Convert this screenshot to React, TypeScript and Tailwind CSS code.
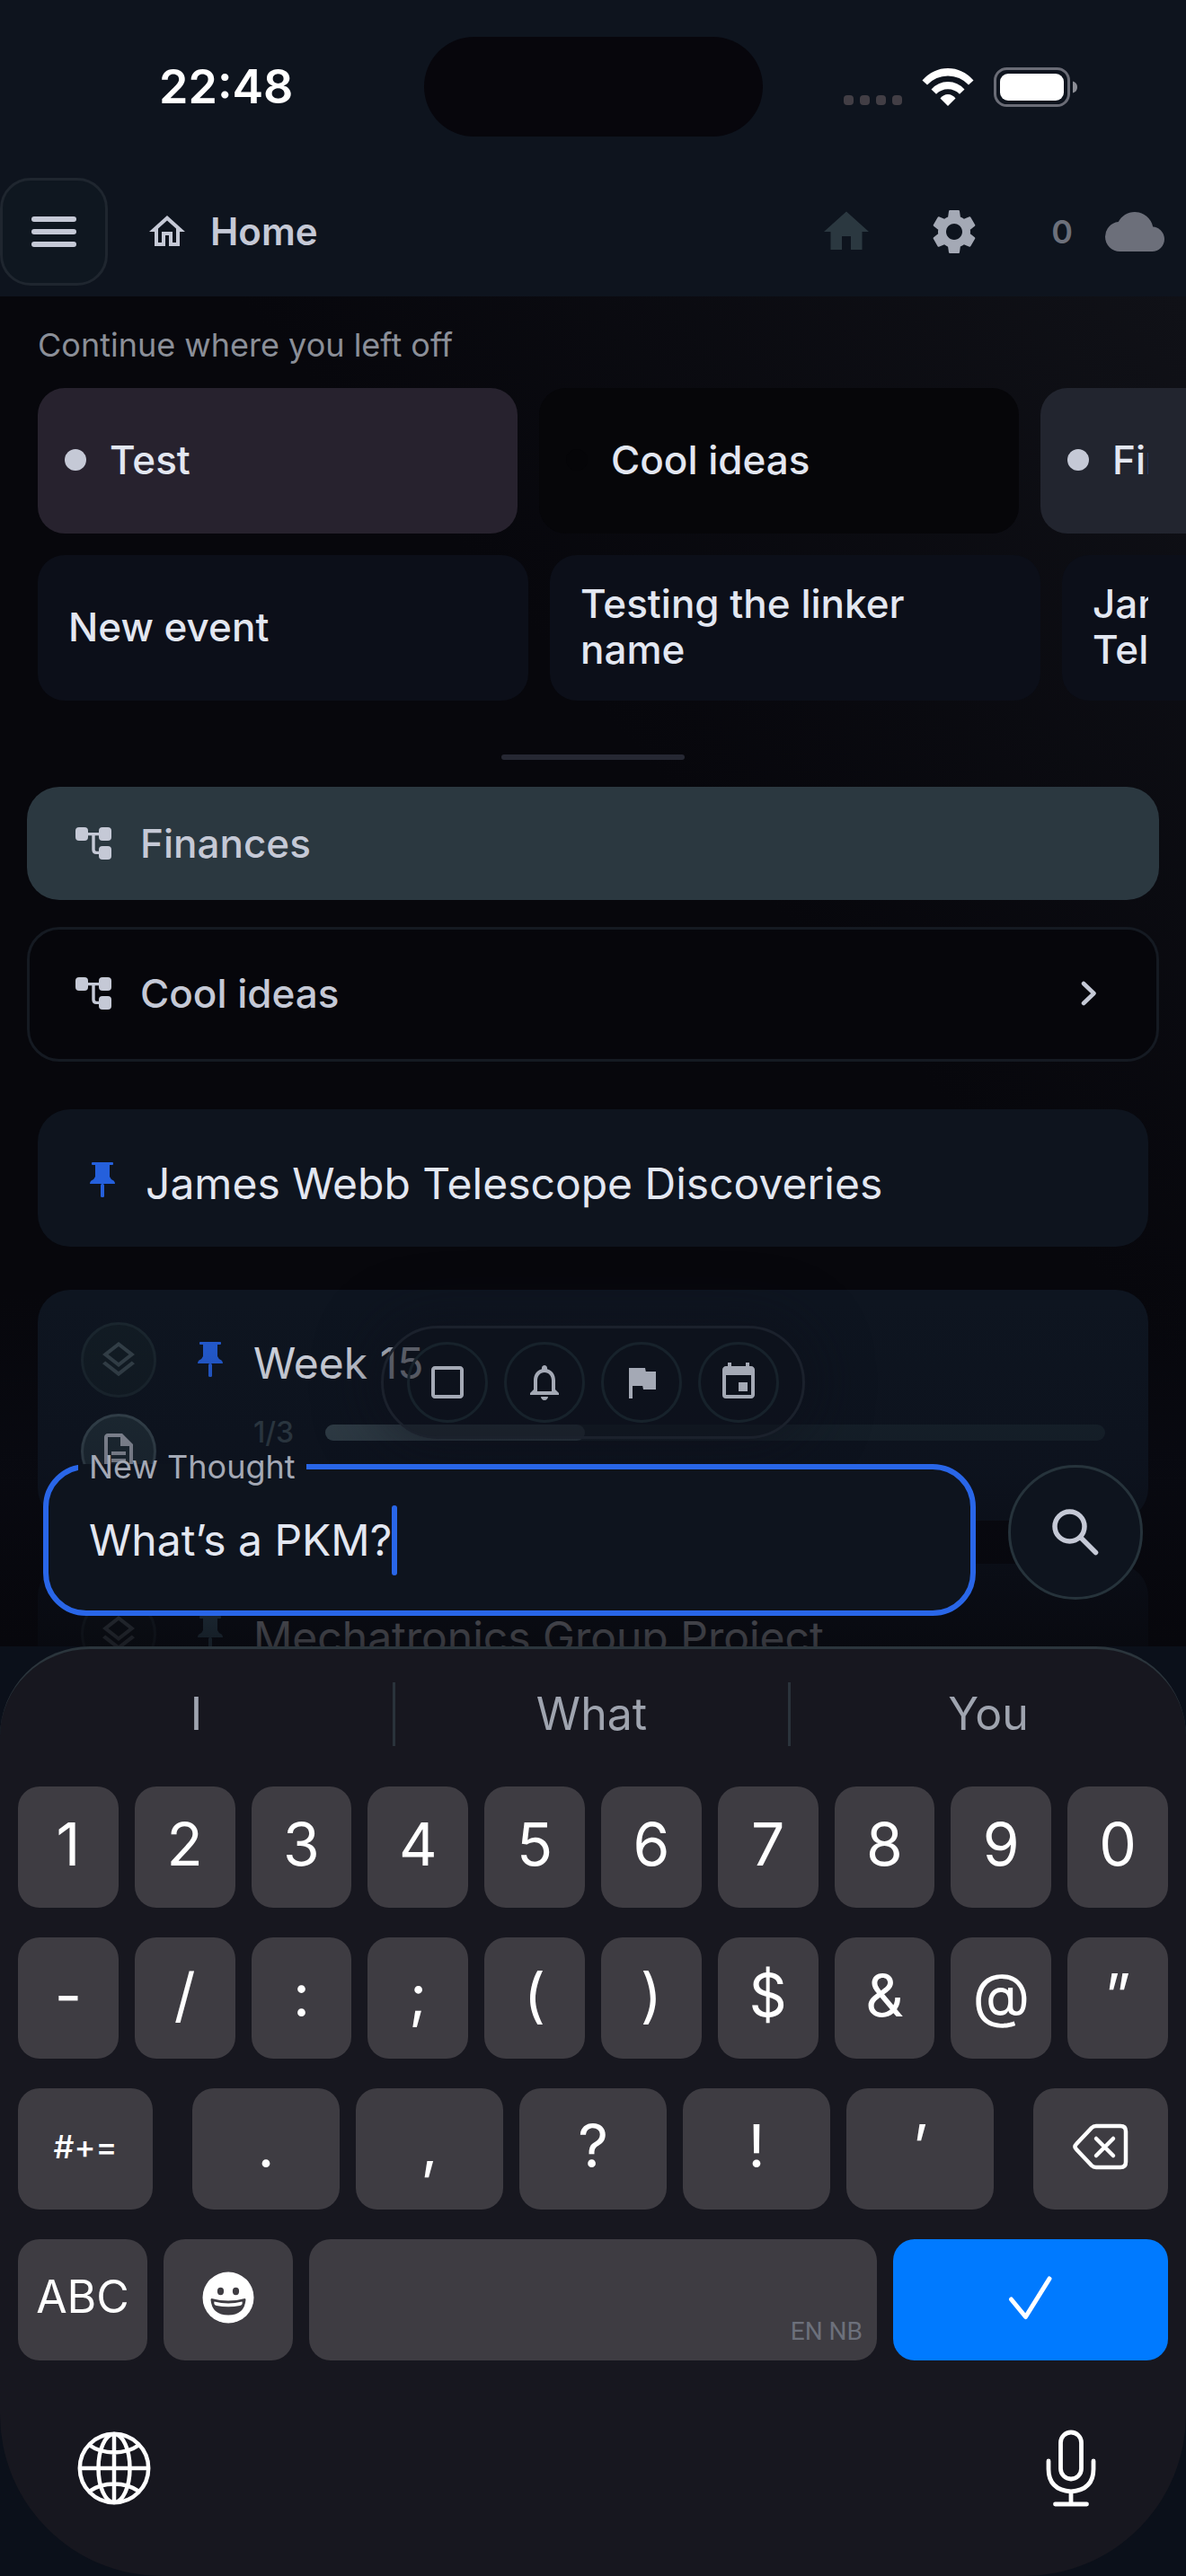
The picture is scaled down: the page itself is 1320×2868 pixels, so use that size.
import {
  MdCheckBoxOutlineBlank,
  MdCloud,
  MdEvent,
  MdFlag,
  MdHome,
  MdNotificationsNone,
  MdOutlineDescription,
  MdOutlineHome,
  MdOutlineLayers,
  MdSettings,
} from "react-icons/md";

function PinIcon({ className = "" }) {
  return (
    <svg viewBox="0 0 28 48" className={`h-12 w-7 shrink-0 ${className}`} fill="currentColor">
      <path d="M3 0h22q1 0 1 1v1q0 1-1 1h-3v13q1 3 4.500 4.500Q28 21.500 28 24H0q0-2.500 1.500-3.500Q5 19 6 16V3H3Q2 3 2 2V1q0-1 1-1z" />
      <rect x="12" y="24" width="4" height="15" rx="1.500" />
    </svg>
  );
}

function TreeIcon() {
  return (
    <svg viewBox="0 0 24 24" className="size-12 shrink-0" fill="currentColor">
      <rect x="2" y="3" width="7" height="7.500" rx="2" />
      <rect x="15" y="3" width="7" height="7.500" rx="2" />
      <rect x="15" y="13.500" width="7" height="7.500" rx="2" />
      <path d="M8 6.800h8M12 7v8.500q0 1.700 1.700 1.700H16" fill="none" stroke="currentColor" strokeWidth="1.700" />
    </svg>
  );
}

function StatusBar() {
  return (
    <div className="grid grid-cols-[1fr_377px_1fr] items-center pt-[41px]">
      <div className="pl-8 text-center text-[52px] leading-[60px] font-semibold text-white">22:48</div>
      <div className="h-[111px] rounded-full bg-[#07060c]" />
      <div className="flex items-center justify-end pr-[120px]">
        <div className="mt-[30px] mr-[22px] flex gap-[7px]">
          <span className="size-[11px] rounded bg-[#423e45]" />
          <span className="size-[11px] rounded bg-[#423e45]" />
          <span className="size-[11px] rounded bg-[#423e45]" />
          <span className="size-[11px] rounded bg-[#423e45]" />
        </div>
        <svg viewBox="0 0 58 42" className="mr-[22px] h-[42px] w-[58px]" fill="white">
          <path d="M0.500 13.500Q12.500 0 29 0T57.500 13.500L52 18.500Q42.500 8.500 29 8.500T6 18.500z" />
          <path d="M10.500 23.500Q18 15 29 15T47.500 23.500L42 28.800Q36.500 23.300 29 23.300T16 28.800z" />
          <path d="M20.500 33.500Q24 29 29 29T37.500 33.500L29 42z" />
        </svg>
        <svg viewBox="0 0 94 44" className="h-[44px] w-[94px]">
          <rect x="1.500" y="1.500" width="82" height="41" rx="13" fill="none" stroke="#6a6c76" strokeWidth="3" />
          <rect x="7" y="7" width="71" height="30" rx="9" fill="white" />
          <path d="M88 15.500q5 1.500 5 6.500t-5 6.500z" fill="#8b8d95" />
        </svg>
      </div>
    </div>
  );
}

function TopBar() {
  return (
    <nav className="mt-[46px] flex items-center pr-6 pb-3 text-[#c5c9d6]">
      <button aria-label="Menu" className="flex size-[120px] items-center justify-center rounded-[34px] border-[3px] border-[#1f262f] bg-[#0f1720]">
        <svg viewBox="0 0 50 34" className="h-[34px] w-[50px]" fill="currentColor">
          <rect width="50" height="6" rx="3" />
          <rect y="14" width="50" height="6" rx="3" />
          <rect y="28" width="50" height="6" rx="3" />
        </svg>
      </button>
      <MdOutlineHome className="ml-[42px] size-12" />
      <h1 className="ml-6 text-[42px] leading-[52px] font-semibold">Home</h1>
      <button aria-label="Go home" className="ml-auto text-[#2b3840]">
        <MdHome className="size-[60px]" />
      </button>
      <button aria-label="Settings" className="ml-[60px] text-[#a4a9b5]">
        <MdSettings className="size-[60px]" />
      </button>
      <span className="ml-[78px] text-[36px] font-semibold text-[#6c707b]">0</span>
      <MdCloud className="ml-9 size-[66px] text-[#6c6f7a]" />
    </nav>
  );
}

const card = "flex h-[162px] shrink-0 items-center rounded-[30px] pb-0.5 text-[44px] leading-[51px] font-medium";

function Recent() {
  return (
    <section className="pt-[34px] pl-[42px]">
      <h2 className="mb-7 text-[36px] leading-10 text-[#8b8f98]">Continue where you left off</h2>
      <div className="flex gap-6 overflow-hidden">
        <a href="#" className={`${card} w-[534px] bg-[#27222e] pl-[30px]`}>
          <span className="mr-[26px] size-6 rounded-full bg-[#c5c9d6]" />
          Test
        </a>
        <a href="#" className={`${card} w-[534px] bg-[#060609] pl-[30px]`}>
          <span className="mr-[26px] size-6 rounded-full bg-[#050508]" />
          Cool ideas
        </a>
        <a href="#" className={`${card} w-[534px] bg-[#22252f] pl-[30px]`}>
          <span className="mr-[26px] size-6 shrink-0 rounded-full bg-[#c5c9d6]" />
          <span className="w-[40px] overflow-hidden">Finances</span>
        </a>
      </div>
      <div className="mt-6 flex gap-6 overflow-hidden">
        <a href="#" className={`${card} w-[546px] bg-[#0c0f19] px-[34px]`}>New event</a>
        <a href="#" className={`${card} w-[546px] bg-[#0c0f19] px-[34px]`}>Testing the linker name</a>
        <a href="#" className={`${card} w-[546px] bg-[#0c0f19] px-[34px]`}>
          <span className="w-[62px] overflow-hidden">James Telescope</span>
        </a>
      </div>
    </section>
  );
}

function Thoughts() {
  return (
    <section>
      <div className="mx-auto mt-[60px] h-1.5 w-[204px] rounded-full bg-[#262833]" />
      <div className="px-[30px] text-[44px] font-medium text-[#c5c9d6]">
        <a href="#" className="mt-[30px] flex h-[126px] items-center gap-7 rounded-[36px] bg-[#2b3840] pl-[50px]">
          <TreeIcon />
          Finances
        </a>
        <a href="#" className="mt-[30px] flex h-[150px] items-center gap-7 rounded-[36px] border-[3px] border-[#151a22] bg-[#06060b] pr-[66px] pb-0.5 pl-[47px]">
          <TreeIcon />
          Cool ideas
          <svg viewBox="0 0 18 28" className="ml-auto h-7 w-[18px]" fill="none" stroke="currentColor" strokeWidth="4.500" strokeLinecap="round" strokeLinejoin="round">
            <path d="M3 3l11.500 11L3 25" />
          </svg>
        </a>
      </div>
      <div className="mt-[53px] flex flex-col gap-12 px-[42px] text-[48px] leading-[60px]">
        <article className="flex h-[153px] items-center gap-[34px] rounded-[36px] bg-[#0e141e] pt-3 pl-[58px]">
          <PinIcon className="text-[#2560dc]" />
          James Webb Telescope Discoveries
        </article>
        <article className="flex h-[257px] gap-[46px] rounded-[36px] bg-[#0e1520] px-12 pt-9">
          <div className="flex flex-col gap-[18px]">
            <span className="flex size-[84px] items-center justify-center rounded-full border-[3px] border-[#1b272f] bg-[#121c24] text-[#36434b]">
              <MdOutlineLayers className="size-12" />
            </span>
            <span className="flex size-[84px] items-center justify-center rounded-full border-[3px] border-[#3b4b54] bg-[#202e37] text-[#a4a9b5]">
              <MdOutlineDescription className="size-12" />
            </span>
          </div>
          <div className="flex-1 pt-4">
            <div className="flex items-center gap-[34px]">
              <PinIcon className="text-[#2560dc]" />
              Week 15
            </div>
            <div className="mt-[27px] flex items-center pl-[62px]">
              <span className="w-20 text-[32px] leading-10 font-medium text-[#35434c]">1/3</span>
              <div className="h-[18px] flex-1 rounded-full bg-[#18242d]">
                <div className="h-full w-1/3 rounded-full bg-[#3a4a53]" />
              </div>
            </div>
          </div>
        </article>
        <article className="flex h-[257px] gap-[46px] rounded-[36px] bg-[#0e1520] px-12 pt-9">
          <span className="flex size-[84px] items-center justify-center rounded-full border-[3px] border-[#26353f] bg-[#121c24] text-[#66747e]">
            <MdOutlineLayers className="size-12" />
          </span>
          <div className="flex items-start gap-[34px] pt-4">
            <PinIcon className="mt-1.5 text-[#4a7288]" />
            Mechatronics Group Project
          </div>
        </article>
      </div>
    </section>
  );
}

const round = "flex size-[90px] items-center justify-center rounded-full border-[3px] border-[#17222b]";

function Composer() {
  return (
    <div className="absolute inset-x-0 bottom-0 bg-linear-to-b from-transparent via-[#0b0e19]/35 to-[#07070c]/80 px-12 pt-9 pb-[34px]">
      <div className="mx-auto mb-[11px] flex w-fit gap-[18px] rounded-full border-[3px] border-[#1b212c] bg-[#0d111b]/60 px-[26px] py-[15px] text-[#a4a9b5] shadow-[0_0_60px_12px_rgba(13,16,26,0.5)]">
        <button aria-label="Task" className={round}><MdCheckBoxOutlineBlank className="size-12" /></button>
        <button aria-label="Reminder" className={round}><MdNotificationsNone className="size-12" /></button>
        <button aria-label="Flag" className={round}><MdFlag className="size-12" /></button>
        <button aria-label="Event" className={round}><MdEvent className="size-12" /></button>
      </div>
      <div className="flex items-center gap-9">
        <fieldset className="min-w-0 flex-1 rounded-[48px] border-[6px] border-[#2966e8] bg-[#0e141e]">
          <legend className="ml-[33px] px-3 text-[36px] leading-10 text-[#a4a9b5]">
            <label htmlFor="thought">New Thought</label>
          </legend>
          <div className="flex h-[140px] items-center pb-4 pl-[45px]">
            <input id="thought" defaultValue="What’s a PKM?" className="field-sizing-content text-[48px] leading-[60px] outline-none" />
            <span className="h-[78px] w-1.5 rounded-full bg-[#2966e8]" />
          </div>
        </fieldset>
        <button aria-label="Search" className="flex size-[150px] items-center justify-center rounded-full border-[3px] border-[#26333b] bg-[#0e141e] text-[#c5c9d6]">
          <svg viewBox="0 0 52 52" className="size-[52px]" fill="none" stroke="currentColor" strokeWidth="5.500" strokeLinecap="round">
            <circle cx="19.500" cy="19.500" r="16.500" />
            <path d="M32 32l16.500 16.500" />
          </svg>
        </button>
      </div>
    </div>
  );
}

const key = "flex h-[135px] items-center justify-center rounded-3xl bg-[#3e3c42] pb-1.5";

function Keyboard() {
  return (
    <div className="rounded-t-[100px] rounded-b-[180px] border-t-[3px] border-[#2b353c] bg-[#17171f] px-5 text-[66px] text-white">
      <div className="-mx-5 mb-[9px] grid h-36 grid-cols-3 items-center divide-x-[3px] divide-[#2a333b] text-[50px] leading-[71px] text-[#9fa4af]">
        <button>I</button>
        <button>What</button>
        <button>You</button>
      </div>
      <div className="grid grid-cols-10 gap-x-[18px] gap-y-[33px]">
        {["1", "2", "3", "4", "5", "6", "7", "8", "9", "0", "-", "/", ":", ";", "(", ")", "$", "&", "@", "”"].map((k) => (
          <button key={k} className={key}>{k}</button>
        ))}
      </div>
      <div className="mt-[33px] flex gap-[18px]">
        <button className={`${key} mr-[26px] w-[150px] text-[36px] font-medium`}>#+=</button>
        {[".", ",", "?", "!", "’"].map((k) => (
          <button key={k} className={`${key} flex-1`}>{k}</button>
        ))}
        <button aria-label="Delete" className={`${key} ml-[26px] w-[150px]`}>
          <svg viewBox="0 0 62 52" className="h-[52px] w-[62px]" fill="none" stroke="currentColor" strokeWidth="4.500" strokeLinecap="round" strokeLinejoin="round">
            <path d="M26 3h27q6 0 6 6v34q0 6-6 6H26q-3 0-5-2L4 29q-3-3 0-6L21 5q2-2 5-2z" />
            <path d="M26 17l19 19M45 17L26 36" />
          </svg>
        </button>
      </div>
      <div className="mt-[33px] flex gap-[18px]">
        <button className={`${key} w-36 text-[50px]`}>ABC</button>
        <button aria-label="Emoji" className={`${key} w-36`}>
          <svg viewBox="0 0 58 58" className="size-[58px]">
            <circle cx="29" cy="29" r="28.500" fill="white" />
            <ellipse cx="20.500" cy="22" rx="3.600" ry="4.200" fill="#3e3c42" />
            <ellipse cx="37.500" cy="22" rx="3.600" ry="4.200" fill="#3e3c42" />
            <path d="M10.500 30q18.500 5 37 0 1 0 1 1.500Q47 48.500 29 48.500T9.500 31.500Q9.500 30 10.500 30z" fill="#3e3c42" />
            <path d="M13.500 33.500q15.500 4 31 0 1 4-2.500 4.500-13 2.500-26 0-3.500-.5-2.500-4.500z" fill="white" />
          </svg>
        </button>
        <button aria-label="Space" className="flex h-[135px] flex-1 items-end justify-end rounded-3xl bg-[#3e3c42] pr-4 pb-3 font-[Roboto,sans-serif] text-[28px] leading-10 text-[#6c707b]">
          EN NB
        </button>
        <button aria-label="Done" className={`${key} w-[306px] bg-[#007aff]`}>
          <svg viewBox="0 0 50 50" className="size-[50px]" fill="none" stroke="currentColor" strokeWidth="5" strokeLinecap="round" strokeLinejoin="round">
            <path d="M3.500 27l16 19.500L46 4" />
          </svg>
        </button>
      </div>
      <div className="flex h-60 items-center justify-between px-[66px]">
        <button aria-label="Change keyboard">
          <svg viewBox="0 0 82 82" className="size-[82px]" fill="none" stroke="currentColor" strokeWidth="4.500">
            <circle cx="41" cy="41" r="38.200" />
            <ellipse cx="41" cy="41" rx="17.500" ry="38" />
            <path d="M41 3v76M3 41h76M13 15q12 8.500 28 8.500T69 15M13 67q12-8.500 28-8.500T69 67" />
          </svg>
        </button>
        <button aria-label="Dictate" className="mr-3.5">
          <svg viewBox="0 0 56 86" className="h-[86px] w-14" fill="none" stroke="currentColor" strokeWidth="4.800" strokeLinecap="round">
            <rect x="16.500" y="3" width="23" height="52" rx="11.500" />
            <path d="M3 35v9q0 23 25 25 25-2 25-25v-9M28 69v14M10.500 83h35" />
          </svg>
        </button>
      </div>
    </div>
  );
}

export default function App() {
  return (
    <div className="flex h-screen flex-col overflow-hidden bg-[#0b101a] font-[Inter,sans-serif] text-[#e3e7f1]">
      <header className="bg-[#0e141e]">
        <StatusBar />
        <TopBar />
      </header>
      <main className="relative min-h-0 flex-1 overflow-hidden bg-[#07070c] bg-linear-to-bl from-[#101117] via-[#07070c] via-40% to-[#07070c]">
        <Recent />
        <Thoughts />
        <Composer />
      </main>
      <Keyboard />
    </div>
  );
}
